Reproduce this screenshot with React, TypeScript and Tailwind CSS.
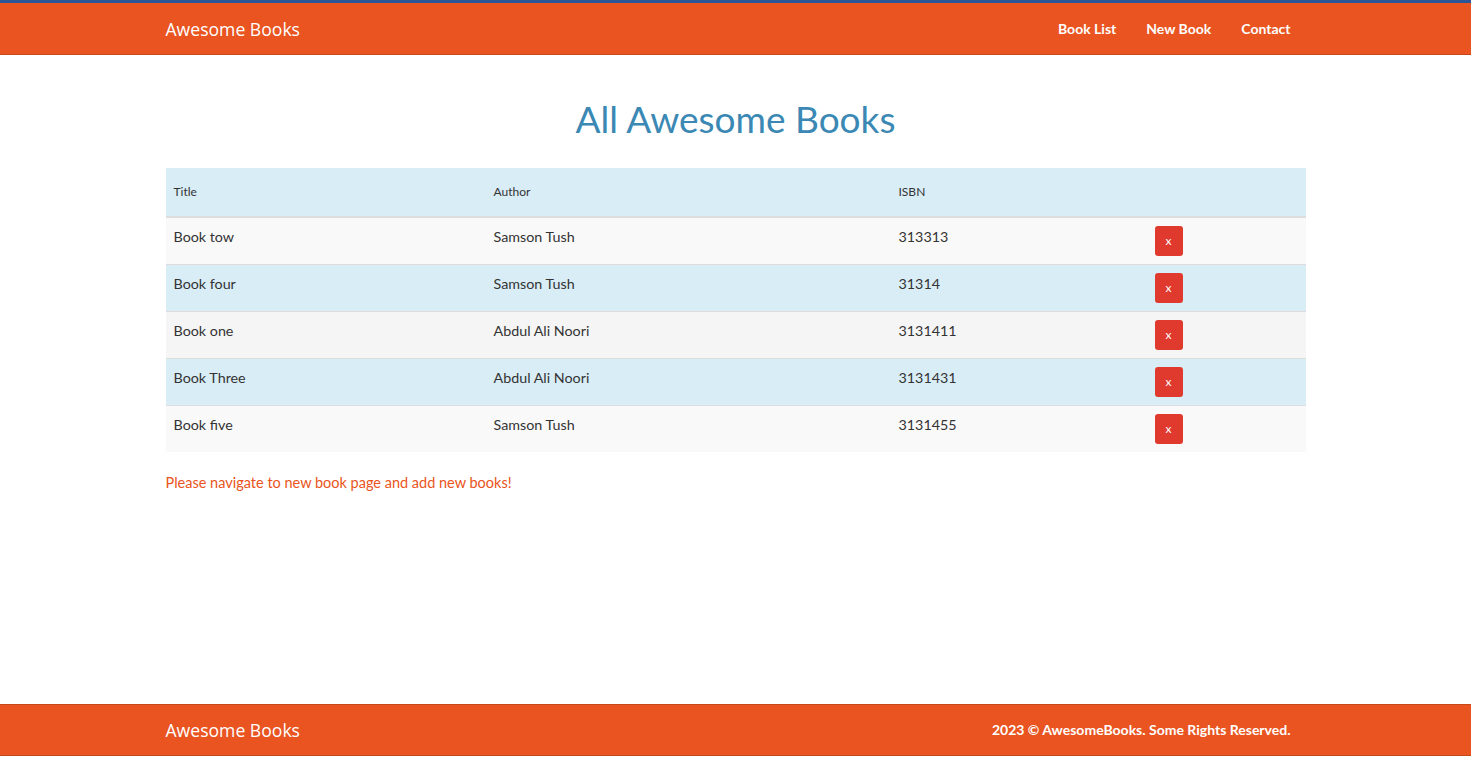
const books = [
  { title: 'Book tow', author: 'Samson Tush', isbn: '313313', bg: 'bg-[#f9f9f9]' },
  { title: 'Book four', author: 'Samson Tush', isbn: '31314', bg: 'bg-[#d9edf7]' },
  { title: 'Book one', author: 'Abdul Ali Noori', isbn: '3131411', bg: 'bg-[#f5f5f5]' },
  { title: 'Book Three', author: 'Abdul Ali Noori', isbn: '3131431', bg: 'bg-[#d9edf7]' },
  { title: 'Book five', author: 'Samson Tush', isbn: '3131455', bg: 'bg-[#f9f9f9]' },
];

const App = () => {
  return (
    <div className="min-h-screen flex flex-col bg-white text-[#333] font-['Lato',sans-serif]">
      <header className="border-t-[3px] border-t-[#2c5697] bg-[#e95420] border-b border-b-[#c7481b]">
        <div className="w-[1140px] mx-auto h-[51px] flex items-center justify-between">
          <span className="text-[17.6px] text-white font-['Open_Sans',sans-serif] pt-[1px]">Awesome Books</span>
          <nav className="flex text-white font-bold text-[14px]">
            <a href="#" className="px-[15px]">Book List</a>
            <a href="#" className="px-[15px]">New Book</a>
            <a href="#" className="px-[15px]">Contact</a>
          </nav>
        </div>
      </header>

      <main className="flex-1">
        <div className="w-[1140px] mx-auto">
          <h1 className="text-center text-[37px] leading-[1.1] text-[#3a88b3] mt-[44px] mb-[28px]">
            All Awesome Books
          </h1>
          <table className="w-full border-collapse">
            <colgroup>
              <col className="w-[320px]" />
              <col className="w-[405px]" />
              <col className="w-[256px]" />
              <col className="w-[159px]" />
            </colgroup>
            <thead>
              <tr className="bg-[#d9edf7] border-b-2 border-[#ddd]">
                <th className="text-left font-normal text-[12px] px-2 h-[49px]">Title</th>
                <th className="text-left font-normal text-[12px] px-2">Author</th>
                <th className="text-left font-normal text-[12px] px-2">ISBN</th>
                <th />
              </tr>
            </thead>
            <tbody>
              {books.map((b) => (
                <tr key={b.isbn} className={`${b.bg} border-t border-[#ddd] first:border-t-0`}>
                  <td className="px-2 pt-[8px] align-top text-[14.3px]">{b.title}</td>
                  <td className="px-2 pt-[8px] align-top text-[14.3px]">{b.author}</td>
                  <td className="px-2 pt-[8px] align-top text-[14.3px]">{b.isbn}</td>
                  <td className="px-2 py-[8px] h-[46px] align-top">
                    <button className="w-[28px] h-[30px] rounded-[3px] bg-[#e0392d] text-white text-[12px] leading-none">
                      x
                    </button>
                  </td>
                </tr>
              ))}
            </tbody>
          </table>
          <p className="mt-[20px] text-[14.5px] text-[#e95420]">
            Please navigate to new book page and add new books!
          </p>
        </div>
      </main>

      <footer className="bg-[#e95420] border-y border-[#c7481b] mb-[2px]">
        <div className="w-[1140px] mx-auto h-[50px] flex items-center justify-between">
          <span className="text-[17.6px] text-white font-['Open_Sans',sans-serif]">Awesome Books</span>
          <span className="text-white font-bold text-[14px] pr-[15px] pb-[2px]">
            2023 © AwesomeBooks. Some Rights Reserved.
          </span>
        </div>
      </footer>
    </div>
  );
};

export default App;
